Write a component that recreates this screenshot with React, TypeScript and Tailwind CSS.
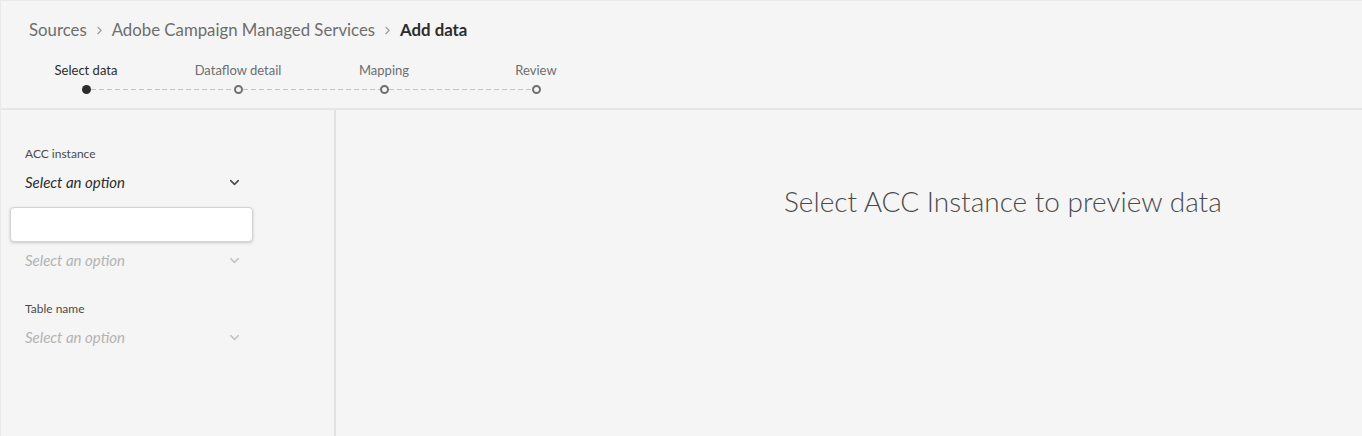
import { ChevronDown, ChevronRight } from "lucide-react";

const steps = [
  { label: "Select data", width: "w-[152px]", active: true },
  { label: "Dataflow detail", width: "w-[152px]", active: false },
  { label: "Mapping", width: "w-[140px]", active: false },
  { label: "Review", width: "w-[164px]", active: false },
];

const dash = "h-px flex-1 bg-[linear-gradient(to_right,#c4c4c4_62%,transparent_0)] bg-[length:8px_1px]";

function Picker({ label, disabled }: { label?: string; disabled?: boolean }) {
  return (
    <div className="flex flex-col">
      {label && <div className="text-[12px] leading-[16px] text-[#4b4b4b] pl-[15px] mb-[9px]">{label}</div>}
      <div className="flex items-center justify-between w-[232px] pl-[15px] h-[22px]">
        <span className={`italic text-[15px] ${disabled ? "text-[#b3b3b3]" : "text-[#2c2c2c]"}`}>Select an option</span>
        <ChevronDown className={`w-[15px] h-[15px] ${disabled ? "text-[#c4c4c4]" : "text-[#4b4b4b]"}`} strokeWidth={2.5} />
      </div>
    </div>
  );
}

export default function App() {
  return (
    <div className="w-full h-[436px] flex flex-col bg-[#f5f5f5] border-t border-[#d6d6d6] border-l border-[#e9e9e9] font-['Lato','Liberation_Sans',sans-serif] overflow-hidden">
      <header className="h-[109px] shrink-0 border-b-2 border-[#e6e6e6]">
        <nav className="flex items-center pl-[28px] pt-[18px] h-[40px] text-[16.8px] text-[#6e6e6e]">
          <span>Sources</span>
          <ChevronRight className="w-[13px] h-[13px] mx-[6px] text-[#9a9a9a]" />
          <span>Adobe Campaign Managed Services</span>
          <ChevronRight className="w-[13px] h-[13px] mx-[6px] text-[#9a9a9a]" />
          <span className="font-bold text-[#2c2c2c]">Add data</span>
        </nav>
        <div className="flex pl-[9px] pt-[21px]">
          {steps.map((s, i) => (
            <div key={s.label} className={`flex flex-col items-center ${s.width}`}>
              <span className={`text-[13px] leading-[16px] ${s.active ? "text-[#2c2c2c]" : "text-[#6e6e6e]"}`}>{s.label}</span>
              <div className="flex items-center w-full mt-[7px]">
                <div className={i === 0 ? "flex-1" : dash} />
                {s.active ? (
                  <div className="w-[9px] h-[9px] rounded-full bg-[#2c2c2c]" />
                ) : (
                  <div className="w-[9px] h-[9px] rounded-full border-2 border-[#707070] bg-[#f5f5f5]" />
                )}
                <div className={i === steps.length - 1 ? "flex-1" : dash} />
              </div>
            </div>
          ))}
        </div>
      </header>
      <div className="flex flex-1">
        <aside className="w-[335px] shrink-0 border-r-2 border-[#e1e1e1] pl-[9px] pt-[36px]">
          <Picker label="ACC instance" />
          <div className="w-[243px] h-[35px] mt-[14px] mb-[7px] bg-white border border-[#d3d3d3] rounded-[4px] shadow-[0_1px_3px_rgba(0,0,0,0.18)]" />
          <Picker disabled />
          <div className="mt-[30px]">
            <Picker label="Table name" disabled />
          </div>
        </aside>
        <main className="flex-1 pl-[448px] pt-[74px]">
          <h2 className="text-[28px] font-light leading-[34px] text-[#4b4b4b]">Select ACC Instance to preview data</h2>
        </main>
      </div>
    </div>
  );
}
